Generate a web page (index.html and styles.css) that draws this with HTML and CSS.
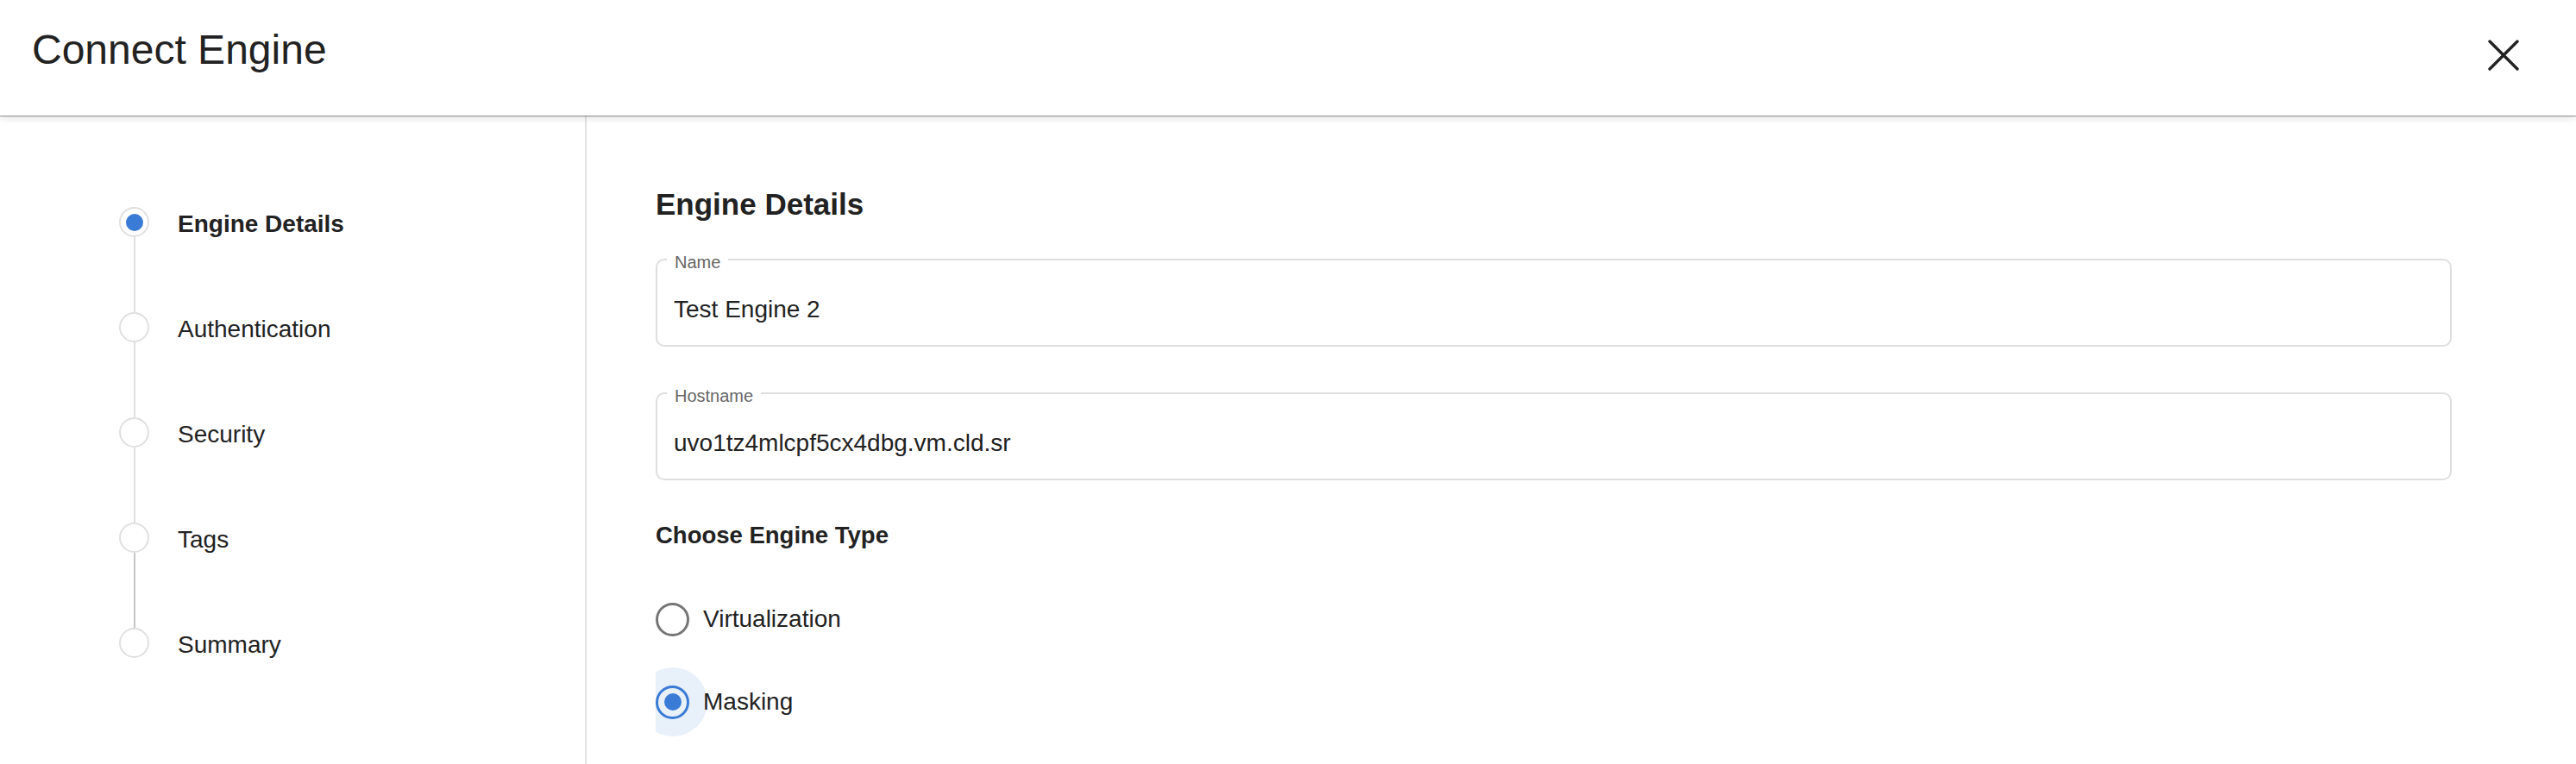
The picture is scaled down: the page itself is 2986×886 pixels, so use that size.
FILE: index.html
```html
<!DOCTYPE html>
<html lang="en">
<head>
<meta charset="utf-8">
<title>Connect Engine</title>
<link rel="stylesheet" href="styles.css">
</head>
<body>
<div class="dialog">
  <header class="dialog-header">
    <h1 class="dialog-title">Connect Engine</h1>
    <button class="close-btn" aria-label="Close">
      <svg width="36" height="36" viewBox="0 0 36 36"><path d="M2 2 34 34M34 2 2 34" stroke="#222" stroke-width="3.4" stroke-linecap="round" fill="none"/></svg>
    </button>
  </header>
  <div class="dialog-body">
    <nav class="stepper">
      <div class="step active">
        <div class="step-rail"><span class="step-dot"></span><span class="step-line"></span></div>
        <span class="step-label">Engine Details</span>
      </div>
      <div class="step">
        <div class="step-rail"><span class="step-dot"></span><span class="step-line"></span></div>
        <span class="step-label">Authentication</span>
      </div>
      <div class="step">
        <div class="step-rail"><span class="step-dot"></span><span class="step-line"></span></div>
        <span class="step-label">Security</span>
      </div>
      <div class="step">
        <div class="step-rail"><span class="step-dot"></span><span class="step-line dark"></span></div>
        <span class="step-label">Tags</span>
      </div>
      <div class="step">
        <div class="step-rail"><span class="step-dot"></span></div>
        <span class="step-label">Summary</span>
      </div>
    </nav>
    <main class="content">
      <h2 class="section-title">Engine Details</h2>
      <div class="field">
        <span class="field-label">Name</span>
        <div class="field-value">Test Engine 2</div>
      </div>
      <div class="field">
        <span class="field-label">Hostname</span>
        <div class="field-value">uvo1tz4mlcpf5cx4dbg.vm.cld.sr</div>
      </div>
      <h3 class="group-title">Choose Engine Type</h3>
      <div class="radio-group">
        <div class="radio-row">
          <span class="radio"><span class="ring"></span></span>
          <span class="radio-label">Virtualization</span>
        </div>
        <div class="radio-row checked">
          <span class="radio"><span class="ripple"></span><span class="ring"><span class="dot"></span></span></span>
          <span class="radio-label">Masking</span>
        </div>
      </div>
    </main>
  </div>
</div>
</body>
</html>
```
FILE: styles.css
```css
* { box-sizing: border-box; }
html, body { margin: 0; padding: 0; }
body {
  font-family: "Liberation Sans", Arial, sans-serif;
  color: #222;
  background: #fff;
  width: 2986px;
  height: 886px;
  overflow: hidden;
}
.dialog { display: flex; flex-direction: column; height: 886px; }
.dialog-header {
  position: relative;
  z-index: 1;
  height: 134px;
  flex: none;
  display: flex;
  justify-content: space-between;
  align-items: flex-start;
  background: #fff;
  box-shadow: 0 1px 1px rgba(0,0,0,0.35), 0 2px 10px rgba(0,0,0,0.14);
}
.dialog-title {
  margin: 0;
  padding: 34px 0 0 37px;
  font-size: 48px;
  line-height: 48px;
  font-weight: 400;
  color: #222;
}
.close-btn {
  border: 0;
  background: none;
  padding: 0;
  margin: 46px 66px 0 0;
  width: 36px;
  height: 36px;
  display: block;
}
.close-btn svg { display: block; }
.dialog-body {
  flex: 1;
  display: grid;
  grid-template-columns: 680px 1fr;
}
.stepper {
  border-right: 2px solid #e2e2e2;
  padding: 106px 0 0 138px;
}
.step { display: flex; gap: 33px; }
.step-rail { display: flex; flex-direction: column; align-items: center; width: 35px; flex: none; }
.step-dot {
  width: 35px; height: 35px;
  border: 2px solid #e0e0e0;
  border-radius: 50%;
  background: #fff;
  display: flex; align-items: center; justify-content: center;
}
.step.active .step-dot::after {
  content: "";
  width: 20px; height: 20px;
  border-radius: 50%;
  background: #3a7bd5;
}
.step-line { width: 2px; height: 87px; background: #dedede; }
.step-line.dark { background: #c6c6c6; }
.step-label { font-size: 28px; line-height: 35px; height: 35px; margin-top: 2px; color: #222; }
.step.active .step-label { font-weight: 700; }
.content { padding: 83px 144px 0 80px; }
.section-title {
  margin: 0 0 43px;
  font-size: 35px;
  line-height: 40px;
  font-weight: 700;
  color: #222;
}
.field {
  position: relative;
  height: 102px;
  border: 2px solid #dfdfdf;
  border-radius: 10px;
  padding: 40px 19px 24px;
  margin-bottom: 53px;
}
.field-label {
  position: absolute;
  top: -8px;
  left: 11px;
  padding: 0 9px;
  background: #fff;
  font-size: 20px;
  line-height: 20px;
  color: #666;
}
.field-value { font-size: 28px; line-height: 34px; color: #222; }
.field + .field { margin-bottom: 47px; }
.group-title {
  margin: 0 0 32px;
  font-size: 27.5px;
  line-height: 34px;
  font-weight: 700;
  color: #222;
}
.radio-group { clip-path: inset(-60px -60px -60px 0); }
.radio-row { display: flex; align-items: center; height: 96px; }
.radio { position: relative; width: 39px; height: 39px; flex: none; }
.ripple {
  position: absolute;
  left: -20.5px; top: -20.5px;
  width: 80px; height: 80px;
  border-radius: 50%;
  background: #e8f0fa;
}
.ring {
  position: relative;
  display: flex; align-items: center; justify-content: center;
  width: 39px; height: 39px;
  border: 3.5px solid #767676;
  border-radius: 50%;
}
.radio-row.checked .ring { border-color: #3a7bd5; }
.dot { width: 20px; height: 20px; border-radius: 50%; background: #3a7bd5; }
.radio-label { position: relative; margin-left: 16px; font-size: 28px; line-height: 34px; color: #222; }
```
